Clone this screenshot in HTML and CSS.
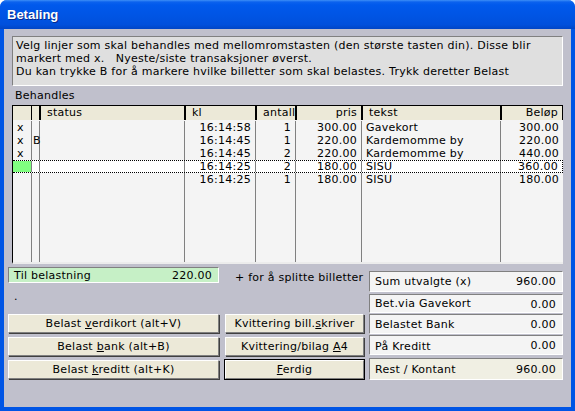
FILE: index.html
```html
<!DOCTYPE html>
<html lang="no">
<head>
<meta charset="utf-8">
<title>Betaling</title>
<link rel="stylesheet" href="styles.css">
</head>
<body>
<div class="window">
  <div class="titlebar">Betaling</div>
  <div class="client">
    <div class="info">
      <div>Velg linjer som skal behandles med mellomromstasten (den største tasten din). Disse blir</div>
      <div>markert med x.&nbsp;&nbsp; Nyeste/siste transaksjoner øverst.</div>
      <div>Du kan trykke B for å markere hvilke billetter som skal belastes. Trykk deretter Belast</div>
    </div>
    <div class="label">Behandles</div>
    <div class="grid">
      <div class="row head">
        <span></span><span></span><span>status</span><span>kl</span><span>antall</span><span class="r">pris</span><span>tekst</span><span class="r">Beløp</span>
      </div>
      <div class="row">
        <span>x</span><span></span><span></span><span class="r">16:14:58</span><span class="r">1</span><span class="r">300.00</span><span>Gavekort</span><span class="r">300.00</span>
      </div>
      <div class="row">
        <span>x</span><span class="b">B</span><span></span><span class="r">16:14:45</span><span class="r">1</span><span class="r">220.00</span><span>Kardemomme by</span><span class="r">220.00</span>
      </div>
      <div class="row">
        <span>x</span><span></span><span></span><span class="r">16:14:45</span><span class="r">2</span><span class="r">220.00</span><span>Kardemomme by</span><span class="r">440.00</span>
      </div>
      <div class="row sel">
        <span class="mark"></span><span></span><span></span><span class="r">16:14:25</span><span class="r">2</span><span class="r">180.00</span><span>SISU</span><span class="r">360.00</span>
      </div>
      <div class="row">
        <span></span><span></span><span></span><span class="r">16:14:25</span><span class="r">1</span><span class="r">180.00</span><span>SISU</span><span class="r">180.00</span>
      </div>
      <div class="row fill">
        <span></span><span></span><span></span><span></span><span></span><span></span><span></span><span></span>
      </div>
    </div>
    <div class="bottom">
      <div class="left">
        <div class="tilrow">
          <div class="tilbox"><span>Til belastning</span><span>220.00</span></div>
          <div class="split">+ for å splitte billetter</div>
        </div>
        <div class="dot">.</div>
        <div class="buttons">
          <button class="btn" type="button">Belast <u>v</u>erdikort (alt+V)</button>
          <button class="btn" type="button">Kvittering bill.<u>s</u>kriver</button>
          <button class="btn" type="button">Belast <u>b</u>ank (alt+B)</button>
          <button class="btn" type="button">Kvittering/bilag <u>A</u>4</button>
          <button class="btn" type="button">Belast <u>k</u>reditt (alt+K)</button>
          <button class="btn default" type="button"><u>F</u>erdig</button>
        </div>
      </div>
      <div class="right">
        <div class="sum s1"><span>Sum utvalgte (x)</span><span>960.00</span></div>
        <div class="sum s2"><span>Bet.via Gavekort</span><span class="low">0.00</span></div>
        <div class="sum s3"><span>Belastet Bank</span><span>0.00</span></div>
        <div class="sum s4"><span class="low">På Kreditt</span><span>0.00</span></div>
        <div class="sum s5"><span>Rest / Kontant</span><span>960.00</span></div>
      </div>
    </div>
  </div>
</div>
</body>
</html>
```
FILE: styles.css
```css
* { box-sizing: border-box; }
html, body { margin: 0; padding: 0; background: #ffffff; }
body {
  font-family: "DejaVu Sans", Verdana, sans-serif;
  font-size: 11px;
  letter-spacing: 0.25px;
  color: #000;
}
.window {
  width: 575px;
  height: 411px;
  display: flex;
  flex-direction: column;
  background: #0055e5;
  border-radius: 7px 7px 0 0;
  overflow: hidden;
}
.titlebar {
  flex: none;
  height: 29px;
  display: flex;
  align-items: center;
  padding: 0 0 1px 7px;
  background: linear-gradient(#3d8ff7 0, #0b62ee 2px, #0059ec 5px, #0055e5 50%, #0050dc 85%, #0045c6 100%);
  color: #fff;
  font: bold 13px "Liberation Sans", Arial, sans-serif;
  letter-spacing: 0;
  text-shadow: 1px 1px 0 #0a2a8a;
}
.client {
  flex: 1;
  margin: 0 4px 4px 4px;
  background: #c0c0cc;
  padding: 7px 8px 0 4px;
}
.info {
  margin-left: 4px;
  height: 50px;
  background: #dfdfdf;
  border-top: 1px solid #808080;
  border-left: 1px solid #808080;
  border-right: 1px solid #fff;
  border-bottom: 1px solid #fff;
  padding: 2px 0 0 3px;
  line-height: 13px;
  white-space: nowrap;
  overflow: hidden;
}
.label {
  margin: 3px 0 3px 7px;
  line-height: 13px;
}
.grid {
  margin-left: 4px;
  width: 551px;
  background: #f4f4f4;
  border-left: 1px solid #000;
  border-top: 1px solid #000;
  border-bottom: 2px solid #ececec;
}
.row {
  display: grid;
  grid-template-columns: 18px 8px 145px 71px 40px 66px 139px 1fr;
  height: 13px;
  line-height: 13px;
}
.row > span {
  border-left: 1px solid #808080;
  padding: 0 4px 0 4px;
  white-space: nowrap;
  overflow: hidden;
}
.row > span:first-child { border-left: 0; }
.row > span.r { text-align: right; }
.row > span.b { padding: 0 0 0 1px; overflow: visible; position: relative; z-index: 1; }
.row.head {
  height: 15px;
  line-height: 14px;
  background: #ece9d8;
  border-bottom: 1px solid #f4f4f4;
}
.row.head > span {
  border-left: 2px solid #000;
  padding: 0 4px 0 6px;
}
.row.head > span:nth-child(2) { border-left: 1px solid #000; }
.row.head > span:first-child { border-left: 0; }
.row.head > span:last-child { border-right: 1px solid #000; }
.row.sel {
  background: #fff;
  border-top: 1px dotted #000;
  border-bottom: 1px dotted #000;
  border-right: 1px dotted #000;
  line-height: 11px;
}
.row.sel > span.mark { background: #80ff80; }
.row.fill { height: 76px; }

.bottom {
  display: flex;
}
.left {
  width: 361px;
  flex: none;
}
.tilrow {
  display: flex;
  align-items: center;
  margin-top: 2px;
}
.tilbox {
  width: 211px;
  height: 16px;
  display: flex;
  justify-content: space-between;
  align-items: center;
  padding: 0 6px 0 5px;
  background: #c6f0c6;
  border-top: 1px solid #808080;
  border-left: 1px solid #808080;
  border-right: 1px solid #fff;
  border-bottom: 1px solid #fff;
}
.split {
  margin: 5px 0 0 16px;
}
.dot {
  margin: 6px 0 0 6px;
  line-height: 13px;
}
.buttons {
  margin-top: 11px;
  display: grid;
  grid-template-columns: 211px 139px;
  grid-auto-rows: 19px;
  column-gap: 6px;
  row-gap: 4px;
}
.btn {
  font: inherit;
  letter-spacing: inherit;
  color: #000;
  margin: 0;
  padding: 0;
  background: #ece9d8;
  border-top: 1px solid #fff;
  border-left: 1px solid #fff;
  border-right: 1px solid #808080;
  border-bottom: 1px solid #808080;
  box-shadow: 1px 1px 0 #404040;
  line-height: 16px;
  text-align: center;
  white-space: nowrap;
}
.btn.default {
  outline: 1px solid #000;
}
.right {
  width: 194px;
  flex: none;
  margin-top: 7px;
  display: flex;
  flex-direction: column;
}
.sum {
  display: flex;
  justify-content: space-between;
  align-items: center;
  padding: 0 6px 0 5px;
  background: #f4f4f4;
  border-top: 1px solid #808080;
  border-left: 1px solid #808080;
  border-right: 1px solid #fff;
  border-bottom: 1px solid #fff;
}
.sum .low { align-self: flex-end; padding-bottom: 1px; }
.s1 { height: 21px; }
.s2 { height: 19px; margin-top: 2px; }
.s3 { height: 20px; margin-top: 1px; }
.s4 { height: 20px; margin-top: 1px; }
.s5 { height: 22px; margin-top: 3px; background: #f0efe3; }
```
